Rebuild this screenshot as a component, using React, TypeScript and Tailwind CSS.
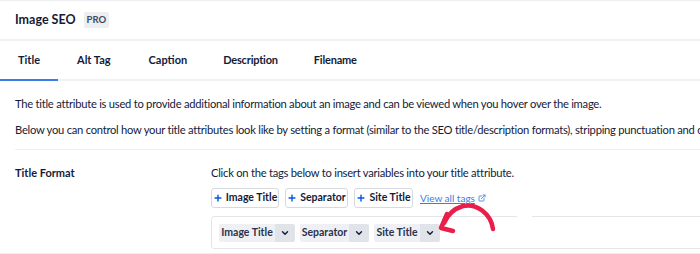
import React from "react";
import { Plus, ChevronDown, ExternalLink } from "lucide-react";

const font = { fontFamily: 'Lato, "Noto Sans", sans-serif' };

function TagBtn({ label, w }: { label: string; w: string }) {
  return (
    <div
      className={`flex h-[20px] items-center justify-center gap-[3px] rounded-[3px] border border-[#d6d9de] bg-white text-[10.5px] font-bold text-[#141b38] ${w}`}
    >
      <Plus size={10} strokeWidth={3.4} className="text-[#005ae0]" />
      <span>{label}</span>
    </div>
  );
}

function Chip({ label, w }: { label: string; w: string }) {
  return (
    <div className="flex h-[18px] items-stretch overflow-hidden rounded-[2px] text-[10.5px] font-bold text-[#2c324c]">
      <div className={`flex items-center justify-center bg-[#eef0f4] ${w}`}>{label}</div>
      <div className="flex w-[20px] items-center justify-center bg-[#e0e3e8]">
        <ChevronDown size={10} strokeWidth={3.4} className="text-[#141b38]" />
      </div>
    </div>
  );
}

export default function App() {
  return (
    <div
      className="relative h-[254px] w-[700px] overflow-hidden border-t border-[#eceef1] bg-white text-[#141b38]"
      style={font}
    >
      <div className="flex h-[40px] items-center gap-[8px] border-b-2 border-[#f0f1f3] px-[15px]">
        <span className="text-[12.5px] font-bold">Image SEO</span>
        <span className="rounded-[2px] bg-[#eceef2] px-[3px] py-[1px] text-[9.5px] font-bold text-[#434960]">PRO</span>
      </div>
      <div className="flex h-[40px] items-stretch border-b-2 border-[#f0f1f3] text-[11px] font-bold">
        <div className="relative flex w-[58px] items-center justify-center">
          Title
          <div className="absolute bottom-[-2px] left-0 h-[2px] w-[58px] bg-[#3b7ce6]" />
        </div>
        <div className="ml-[19px] flex items-center">Alt Tag</div>
        <div className="ml-[38px] flex items-center">Caption</div>
        <div className="ml-[36px] flex items-center tracking-[-0.2px]">Description</div>
        <div className="ml-[36px] flex items-center tracking-[-0.2px]">Filename</div>
      </div>
      <div className="whitespace-nowrap px-[15px] text-[11.2px] tracking-[-0.25px] text-[#141b38]">
        <p className="mt-[13px] leading-[20px]">
          The title attribute is used to provide additional information about an image and can be viewed when you hover over the image.
        </p>
        <p className="mt-[6px] leading-[20px]">
          Below you can control how your title attributes look like by setting a format (similar to the SEO title/description formats), stripping punctuation and converting case.
        </p>
      </div>
      <div className="ml-[15px] mt-[9px] h-[1px] bg-[#eceef1]" />
      <div className="flex px-[15px] pt-[13px]">
        <div className="w-[196px] shrink-0 text-[11px] font-bold leading-[20px]">Title Format</div>
        <div className="min-w-0 flex-1">
          <div className="whitespace-nowrap text-[11.2px] leading-[20px] tracking-[-0.25px]">
            Click on the tags below to insert variables into your title attribute.
          </div>
          <div className="mt-[5px] flex items-center gap-[6px]">
            <TagBtn label="Image Title" w="w-[68px]" />
            <TagBtn label="Separator" w="w-[63px]" />
            <TagBtn label="Site Title" w="w-[59px]" />
            <span className="ml-[1px] flex items-center gap-[3px] text-[10px] text-[#3b7ce6] underline">
              View all tags
              <ExternalLink size={8} strokeWidth={2.5} />
            </span>
          </div>
          <div className="mt-[8px] flex h-[33px] w-[600px] items-center gap-[5px] rounded-[3px] border border-[#e3e5e9] px-[7px]">
            <Chip label="Image Title" w="w-[56px]" />
            <Chip label="Separator" w="w-[49px]" />
            <Chip label="Site Title" w="w-[46px]" />
          </div>
        </div>
      </div>
      <div className="mt-[4px] h-[1px] bg-[#eceef1]" />
      <svg
        className="absolute left-[430px] top-[195px]"
        width="105"
        height="45"
        viewBox="0 0 105 45"
        fill="none"
      >
        <rect x="87" y="19" width="15" height="3" fill="#ffffff" />
        <path
          d="M63 33 C61 18 47 7 33 10 C23 13 17 20 14 27"
          stroke="#ea1e4a"
          strokeWidth="4.5"
          strokeLinecap="round"
        />
        <path
          d="M17 18 L11 32 L23 35"
          stroke="#ea1e4a"
          strokeWidth="4.5"
          strokeLinecap="round"
          strokeLinejoin="round"
        />
      </svg>
    </div>
  );
}
